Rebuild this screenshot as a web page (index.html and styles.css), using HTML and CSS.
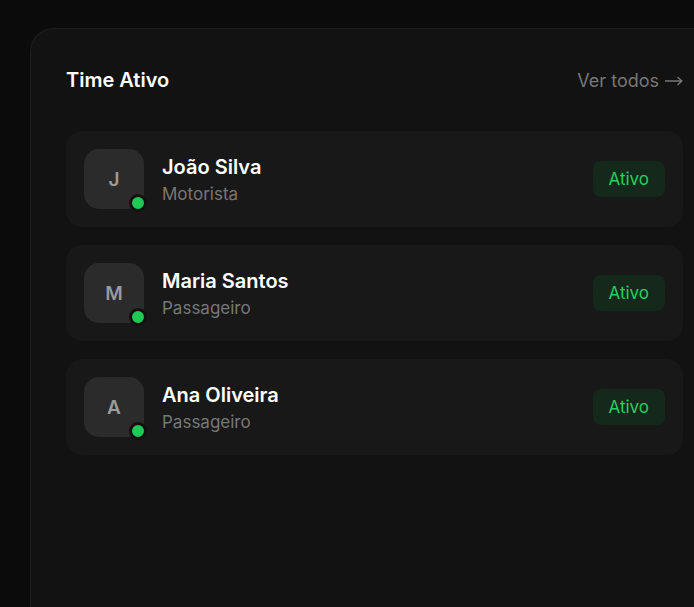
FILE: index.html
```html
<!DOCTYPE html>
<html lang="pt">
<head>
<meta charset="utf-8">
<link rel="stylesheet" href="styles.css">
</head>
<body>
<section class="panel">
  <header class="panel-head">
    <h2 class="panel-title">Time Ativo</h2>
    <a class="see-all" href="#">Ver todos <svg class="arrow" width="18" height="10" viewBox="0 0 18 10" aria-hidden="true"><path d="M0 5H16.5M12.5 1L16.8 5L12.5 9" fill="none" stroke="currentColor" stroke-width="1.4"/></svg></a>
  </header>
  <ul class="team">
    <li class="member">
      <div class="avatar">J<span class="dot"></span></div>
      <div class="info">
        <div class="name">João Silva</div>
        <div class="role">Motorista</div>
      </div>
      <span class="badge">Ativo</span>
    </li>
    <li class="member">
      <div class="avatar">M<span class="dot"></span></div>
      <div class="info">
        <div class="name">Maria Santos</div>
        <div class="role">Passageiro</div>
      </div>
      <span class="badge">Ativo</span>
    </li>
    <li class="member">
      <div class="avatar">A<span class="dot"></span></div>
      <div class="info">
        <div class="name">Ana Oliveira</div>
        <div class="role">Passageiro</div>
      </div>
      <span class="badge">Ativo</span>
    </li>
  </ul>
</section>
</body>
</html>
```
FILE: styles.css
```css
html, body {
  margin: 0;
  padding: 0;
  background: #0b0b0b;
  overflow: hidden;
  height: 100%;
}
body {
  font-family: Inter, "Noto Sans", sans-serif;
  color: #fff;
}
.panel {
  margin: 28px 0 0 30px;
  height: 579px;
  box-sizing: border-box;
  background: #121212;
  border: 1px solid #1f1f1f;
  border-right: none;
  border-bottom: none;
  border-radius: 24px 0 0 0;
  padding: 39px 0 0 35px;
  overflow: hidden;
}
.panel-head {
  display: flex;
  justify-content: space-between;
  align-items: center;
  height: 24px;
  width: 617px;
  margin-bottom: 39px;
}
.panel-title {
  margin: 0;
  font-size: 20px;
  font-weight: 600;
}
.see-all {
  display: flex;
  align-items: center;
  gap: 6px;
  color: #777;
  text-decoration: none;
  font-size: 18px;
}
.arrow {
  display: block;
  margin-top: 1px;
}
.team {
  list-style: none;
  margin: 0;
  padding: 0;
  width: 617px;
  display: flex;
  flex-direction: column;
  gap: 18px;
}
.member {
  display: flex;
  align-items: center;
  gap: 18px;
  height: 96px;
  box-sizing: border-box;
  padding: 0 18px;
  background: #181818;
  border-radius: 16px;
}
.avatar {
  position: relative;
  width: 60px;
  height: 60px;
  flex: none;
  border-radius: 15px;
  background: #2b2b2b;
  color: #9a9a9a;
  font-size: 19px;
  font-weight: 600;
  display: flex;
  align-items: center;
  justify-content: center;
}
.dot {
  position: absolute;
  right: -3px;
  bottom: -3px;
  width: 12px;
  height: 12px;
  border-radius: 50%;
  background: #1ec954;
  border: 3px solid #111;
}
.info {
  flex: 1;
  display: flex;
  flex-direction: column;
  gap: 4px;
  margin-top: 1px;
}
.name {
  font-size: 20px;
  font-weight: 600;
  line-height: 24px;
}
.role {
  font-size: 17px;
  line-height: 22px;
  color: #777;
}
.badge {
  background: #14291b;
  color: #22d15f;
  font-size: 17px;
  line-height: 36px;
  height: 36px;
  padding: 0 16px;
  border-radius: 8px;
}
```
